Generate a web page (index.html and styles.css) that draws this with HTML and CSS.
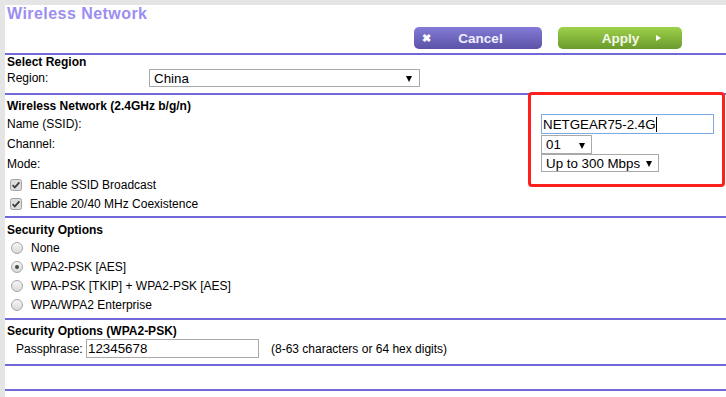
FILE: index.html
```html
<!DOCTYPE html>
<html>
<head>
    <title>Wireless Network</title>
    <link rel="stylesheet" href="styles.css">
</head>
<body>
    <div class="page">
        <!-- Header with title and action buttons -->
        <div class="header">
            <h1 class="title">Wireless Network</h1>
            <div class="actions">
                <button class="btn btn-cancel"><span class="btn-x">&#x2716;</span><span class="btn-text">Cancel</span></button>
                <button class="btn btn-apply"><span class="btn-text">Apply</span><span class="btn-arrow"></span></button>
            </div>
        </div>
        <div class="rule"></div>

        <!-- Region -->
        <div class="block block-region">
            <div class="heading">Select Region</div>
            <div class="region-row">
                <span class="lbl">Region:</span>
                <div class="sel sel-region">
                    <select><option>China</option></select>
                    <span class="arrow"></span>
                </div>
            </div>
        </div>
        <div class="rule"></div>

        <!-- Wireless settings -->
        <div class="block block-wifi">
            <div class="heading">Wireless Network (2.4GHz b/g/n)</div>
            <div class="wifi-grid">
                <span class="lbl row-name">Name (SSID):</span>
                <div class="field row-name">
                    <input type="text" class="txt txt-ssid" value="NETGEAR75-2.4G">
                    <span class="caret"></span>
                </div>
                <span class="lbl row-channel">Channel:</span>
                <div class="field row-channel">
                    <div class="sel sel-channel">
                        <select><option>01</option></select>
                        <span class="arrow"></span>
                    </div>
                </div>
                <span class="lbl row-mode">Mode:</span>
                <div class="field row-mode">
                    <div class="sel sel-mode">
                        <select><option>Up to 300 Mbps</option></select>
                        <span class="arrow"></span>
                    </div>
                </div>
            </div>
            <div class="check-row first">
                <svg class="box" width="12" height="12" viewBox="0 0 12 12"><rect x="0.5" y="0.5" width="11" height="11" rx="2" class="box-bg"/><path d="M2.6 6.2 L4.8 8.4 L9.4 3.4" class="box-tick"/></svg>
                <span>Enable SSID Broadcast</span>
            </div>
            <div class="check-row">
                <svg class="box" width="12" height="12" viewBox="0 0 12 12"><rect x="0.5" y="0.5" width="11" height="11" rx="2" class="box-bg"/><path d="M2.6 6.2 L4.8 8.4 L9.4 3.4" class="box-tick"/></svg>
                <span>Enable 20/40 MHz Coexistence</span>
            </div>
            <!-- Annotation frame -->
            <div class="mark"></div>
        </div>
        <div class="rule"></div>

        <!-- Security options -->
        <div class="block block-security">
            <div class="heading">Security Options</div>
            <div class="radio-row"><span class="radio"></span><span>None</span></div>
            <div class="radio-row"><span class="radio on"></span><span>WPA2-PSK [AES]</span></div>
            <div class="radio-row"><span class="radio"></span><span>WPA-PSK [TKIP] + WPA2-PSK [AES]</span></div>
            <div class="radio-row"><span class="radio"></span><span>WPA/WPA2 Enterprise</span></div>
        </div>
        <div class="rule"></div>

        <!-- Passphrase -->
        <div class="block block-pass">
            <div class="heading">Security Options (WPA2-PSK)</div>
            <div class="pass-row">
                <span>Passphrase:</span>
                <input type="text" class="txt txt-pass" value="12345678">
                <span class="hint">(8-63 characters or 64 hex digits)</span>
            </div>
        </div>
        <div class="rule"></div>
        <div class="block-empty"></div>
        <div class="rule"></div>
    </div>
</body>
</html>
```

FILE: styles.css
```css
* {
    box-sizing: border-box;
}
body {
    margin: 0;
    background-color: #e5e5e5;
    font-family: "Liberation Sans", Arial, sans-serif;
    font-size: 12px;
    color: #000000;
}
.page {
    margin: 5px 0 0 5px;
    min-height: calc(100vh - 5px);
    background-color: #ffffff;
}
.header {
    padding-bottom: 4px;
}
.title {
    margin: 0;
    padding-left: 2px;
    font-size: 16px;
    line-height: 18px;
    font-weight: bold;
    letter-spacing: 0.45px;
    color: #9a8ef0;
}
.actions {
    display: flex;
    justify-content: flex-end;
    gap: 16px;
    margin-top: 4px;
    padding-right: 44px;
}
.btn {
    display: flex;
    align-items: center;
    height: 22px;
    padding: 0;
    border: none;
    border-radius: 5px;
    font-family: "Liberation Sans", Arial, sans-serif;
    font-size: 13.5px;
    font-weight: bold;
    color: #eef0ff;
}
.btn-cancel {
    width: 128px;
    background: linear-gradient(#837bd6, #5b53a6);
}
.btn-x {
    margin-left: 8px;
    font-size: 11px;
    color: #ffffff;
}
.btn-cancel .btn-text {
    flex: 1;
    text-align: center;
    padding-right: 12px;
}
.btn-apply {
    width: 124px;
    background: linear-gradient(#9ed14b, #6a9a2d);
    color: #f4f8e8;
}
.btn-apply .btn-text {
    flex: 1;
    text-align: center;
    padding-left: 27px;
}
.btn-arrow {
    width: 0;
    height: 0;
    margin-right: 21px;
    border-top: 3.5px solid transparent;
    border-bottom: 3.5px solid transparent;
    border-left: 5px solid #ffffff;
}
.rule {
    height: 2px;
    background-color: #7169d9;
}
.heading {
    padding-left: 2px;
    font-weight: bold;
    line-height: 15px;
}
.lbl {
    padding-left: 2px;
}
/* Region */
.block-region {
    padding-bottom: 6px;
}
.block-region .heading {
    line-height: 14px;
}
.region-row {
    display: grid;
    grid-template-columns: 144px 271px;
    align-items: center;
    height: 18px;
}
.sel {
    position: relative;
    height: 100%;
}
.sel select {
    appearance: none;
    width: 100%;
    height: 100%;
    margin: 0;
    padding: 0 0 0 4px;
    border: 1px solid #a9a9a9;
    border-radius: 0;
    background-color: #ffffff;
    font-family: "Liberation Sans", Arial, sans-serif;
    font-size: 13.33px;
    color: #000000;
}
.arrow {
    position: absolute;
    right: 7px;
    top: 50%;
    margin-top: -2px;
    width: 0;
    height: 0;
    border-left: 3px solid transparent;
    border-right: 3px solid transparent;
    border-top: 6px solid #000000;
}
.sel-region .arrow {
    right: 8px;
}
/* Wireless */
.block-wifi {
    position: relative;
    padding: 4px 0 3px;
}
.wifi-grid {
    display: grid;
    grid-template-columns: 536px 1fr;
    grid-template-rows: 20px 20px 19px;
    align-items: center;
}
.field {
    position: relative;
    height: 100%;
    display: flex;
    align-items: center;
}
.txt {
    margin: 0;
    padding: 0 1px;
    border: 1px solid #a9a9a9;
    border-radius: 0;
    font-family: "Liberation Sans", Arial, sans-serif;
    font-size: 13.33px;
    color: #000000;
    outline: none;
}
.txt-ssid {
    width: 173px;
    height: 20px;
    border-color: #7eaae3;
}
.caret {
    position: absolute;
    left: 115px;
    top: 3px;
    width: 1px;
    height: 15px;
    background-color: #000000;
}
.sel-channel {
    width: 51px;
    height: 19px;
    margin-top: 1px;
}
.sel-mode {
    width: 118px;
    height: 18px;
    margin-top: -1px;
}
.check-row {
    display: flex;
    align-items: center;
    gap: 8px;
    height: 19px;
    padding-left: 5px;
}
.check-row.first {
    margin-top: 2px;
}
.box-bg {
    fill: #dedede;
    stroke: #a3a3a3;
}
.box-tick {
    fill: none;
    stroke: #3f3f3f;
    stroke-width: 1.8;
}
.mark {
    position: absolute;
    left: 523px;
    top: -3px;
    width: 197px;
    height: 95px;
    border: 3px solid #fe1f1f;
    border-radius: 4px;
    pointer-events: none;
}
/* Security */
.block-security {
    padding: 5px 0 4px;
}
.radio-row {
    display: flex;
    align-items: center;
    gap: 8px;
    height: 19px;
    padding-left: 6px;
}
.radio {
    position: relative;
    width: 12px;
    height: 12px;
    border: 1px solid #a6a6a6;
    border-radius: 50%;
    background: linear-gradient(#f6f6f6, #d9d9d9);
}
.radio.on::after {
    content: "";
    position: absolute;
    left: 3px;
    top: 3px;
    width: 4px;
    height: 4px;
    border-radius: 50%;
    background-color: #4a4a4a;
}
/* Passphrase */
.block-pass {
    padding: 4px 0 6px;
}
.pass-row {
    display: grid;
    grid-template-columns: 70px 173px auto;
    align-items: center;
    height: 19px;
    padding-left: 11px;
}
.txt-pass {
    width: 173px;
    height: 19px;
}
.hint {
    margin-left: 12px;
}
.block-empty {
    height: 23px;
}
```
